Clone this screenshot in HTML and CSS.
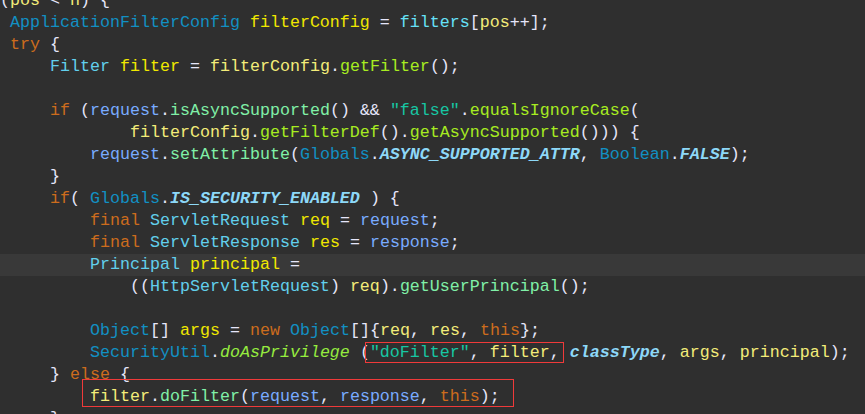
FILE: index.html
```html
<!DOCTYPE html>
<html>
<head>
<meta charset="utf-8">
<link rel="stylesheet" href="styles.css">
</head>
<body>
<div class="editor">
<div class="code">
<div class="ln"><span class="op">(</span><span class="lv">pos</span> <span class="op">&lt;</span> <span class="lv">n</span><span class="op">) {</span></div>
<div class="ln"> <span class="cls">ApplicationFilterConfig</span> <span class="dv">filterConfig</span> <span class="op">=</span> <span class="fld">filters</span><span class="op">[</span><span class="lv">pos</span><span class="op">++];</span></div>
<div class="ln"> <span class="kw">try</span> <span class="op">{</span></div>
<div class="ln">     <span class="ifc">Filter</span> <span class="dv">filter</span> <span class="op">=</span> <span class="lv">filterConfig</span><span class="op">.</span><span class="mt">getFilter</span><span class="op">();</span></div>
<div class="ln"> </div>
<div class="ln">     <span class="kw">if</span> <span class="op">(</span><span class="prm">request</span><span class="op">.</span><span class="amt">isAsyncSupported</span><span class="op">() &amp;&amp;</span> <span class="str">"false"</span><span class="op">.</span><span class="mt">equalsIgnoreCase</span><span class="op">(</span></div>
<div class="ln">             <span class="lv">filterConfig</span><span class="op">.</span><span class="mt">getFilterDef</span><span class="op">().</span><span class="mt">getAsyncSupported</span><span class="op">())) {</span></div>
<div class="ln">         <span class="prm">request</span><span class="op">.</span><span class="amt">setAttribute</span><span class="op">(</span><span class="cls">Globals</span><span class="op">.</span><span class="cst">ASYNC_SUPPORTED_ATTR</span><span class="op">,</span> <span class="cls">Boolean</span><span class="op">.</span><span class="cst">FALSE</span><span class="op">);</span></div>
<div class="ln">     <span class="op">}</span></div>
<div class="ln">     <span class="kw">if</span><span class="op">(</span> <span class="cls">Globals</span><span class="op">.</span><span class="cst">IS_SECURITY_ENABLED</span> <span class="op">) {</span></div>
<div class="ln">         <span class="kw">final</span> <span class="ifc">ServletRequest</span> <span class="dv">req</span> <span class="op">=</span> <span class="prm">request</span><span class="op">;</span></div>
<div class="ln">         <span class="kw">final</span> <span class="ifc">ServletResponse</span> <span class="dv">res</span> <span class="op">=</span> <span class="prm">response</span><span class="op">;</span></div>
<div class="ln current">         <span class="ifc">Principal</span> <span class="dv">principal</span> <span class="op">=</span></div>
<div class="ln">             <span class="op">((</span><span class="ifc">HttpServletRequest</span><span class="op">)</span> <span class="lv">req</span><span class="op">).</span><span class="amt">getUserPrincipal</span><span class="op">();</span></div>
<div class="ln"> </div>
<div class="ln">         <span class="cls">Object</span><span class="op">[]</span> <span class="dv">args</span> <span class="op">=</span> <span class="kw">new</span> <span class="cls">Object</span><span class="op">[]{</span><span class="lv">req</span><span class="op">,</span> <span class="lv">res</span><span class="op">,</span> <span class="kw">this</span><span class="op">};</span></div>
<div class="ln">         <span class="cls">SecurityUtil</span><span class="op">.</span><span class="smt">doAsPrivilege</span> <span class="op">(</span><span class="str">"doFilter"</span><span class="op">,</span> <span class="lv">filter</span><span class="op">,</span> <span class="sfld">classType</span><span class="op">,</span> <span class="lv">args</span><span class="op">,</span> <span class="lv">principal</span><span class="op">);</span></div>
<div class="ln">     <span class="op">}</span> <span class="kw">else</span> <span class="op">{</span></div>
<div class="ln">         <span class="lv">filter</span><span class="op">.</span><span class="amt">doFilter</span><span class="op">(</span><span class="prm">request</span><span class="op">,</span> <span class="prm">response</span><span class="op">,</span> <span class="kw">this</span><span class="op">);</span></div>
<div class="ln">     <span class="op">}</span></div>
<div class="mark mark-a"></div>
<div class="mark mark-b"></div>
</div>
</div>
</body>
</html>
```

FILE: styles.css
```css
html, body {
  margin: 0;
  padding: 0;
  background: #2f2f2f;
}

.editor {
  width: 865px;
  height: 414px;
  overflow: hidden;
  background: #2f2f2f;
}

.code {
  position: relative;
  margin-top: -10px;
  font-family: "Liberation Mono", "DejaVu Sans Mono", monospace;
  font-size: 16.667px;
  color: #e6e6fa;
}

.ln {
  height: 22px;
  line-height: 22px;
  white-space: pre;
}

.current {
  background: #393939;
}

.op { color: #e6e6fa; }
.kw { color: #cc6c1d; }
.cls { color: #1290c3; }
.ifc { color: #62cfec; }
.lv { color: #f3ec79; }
.dv { color: #f0e800; }
.fld { color: #66e1f8; }
.prm { color: #79abff; }
.mt { color: #a7ec21; }
.amt { color: #80f0a7; }
.smt { color: #96ec3f; font-style: italic; }
.cst { color: #8dd8f8; font-style: italic; font-weight: bold; }
.sfld { color: #8dd8f8; font-style: italic; font-weight: bold; }
.str { color: #17c6a3; }

.mark {
  position: absolute;
  border: 1px solid #f03a3a;
  box-sizing: border-box;
}

.mark-a {
  left: 365px;
  top: 352px;
  width: 199px;
  height: 21px;
}

.mark-b {
  left: 82px;
  top: 389px;
  width: 432px;
  height: 28px;
}
```
